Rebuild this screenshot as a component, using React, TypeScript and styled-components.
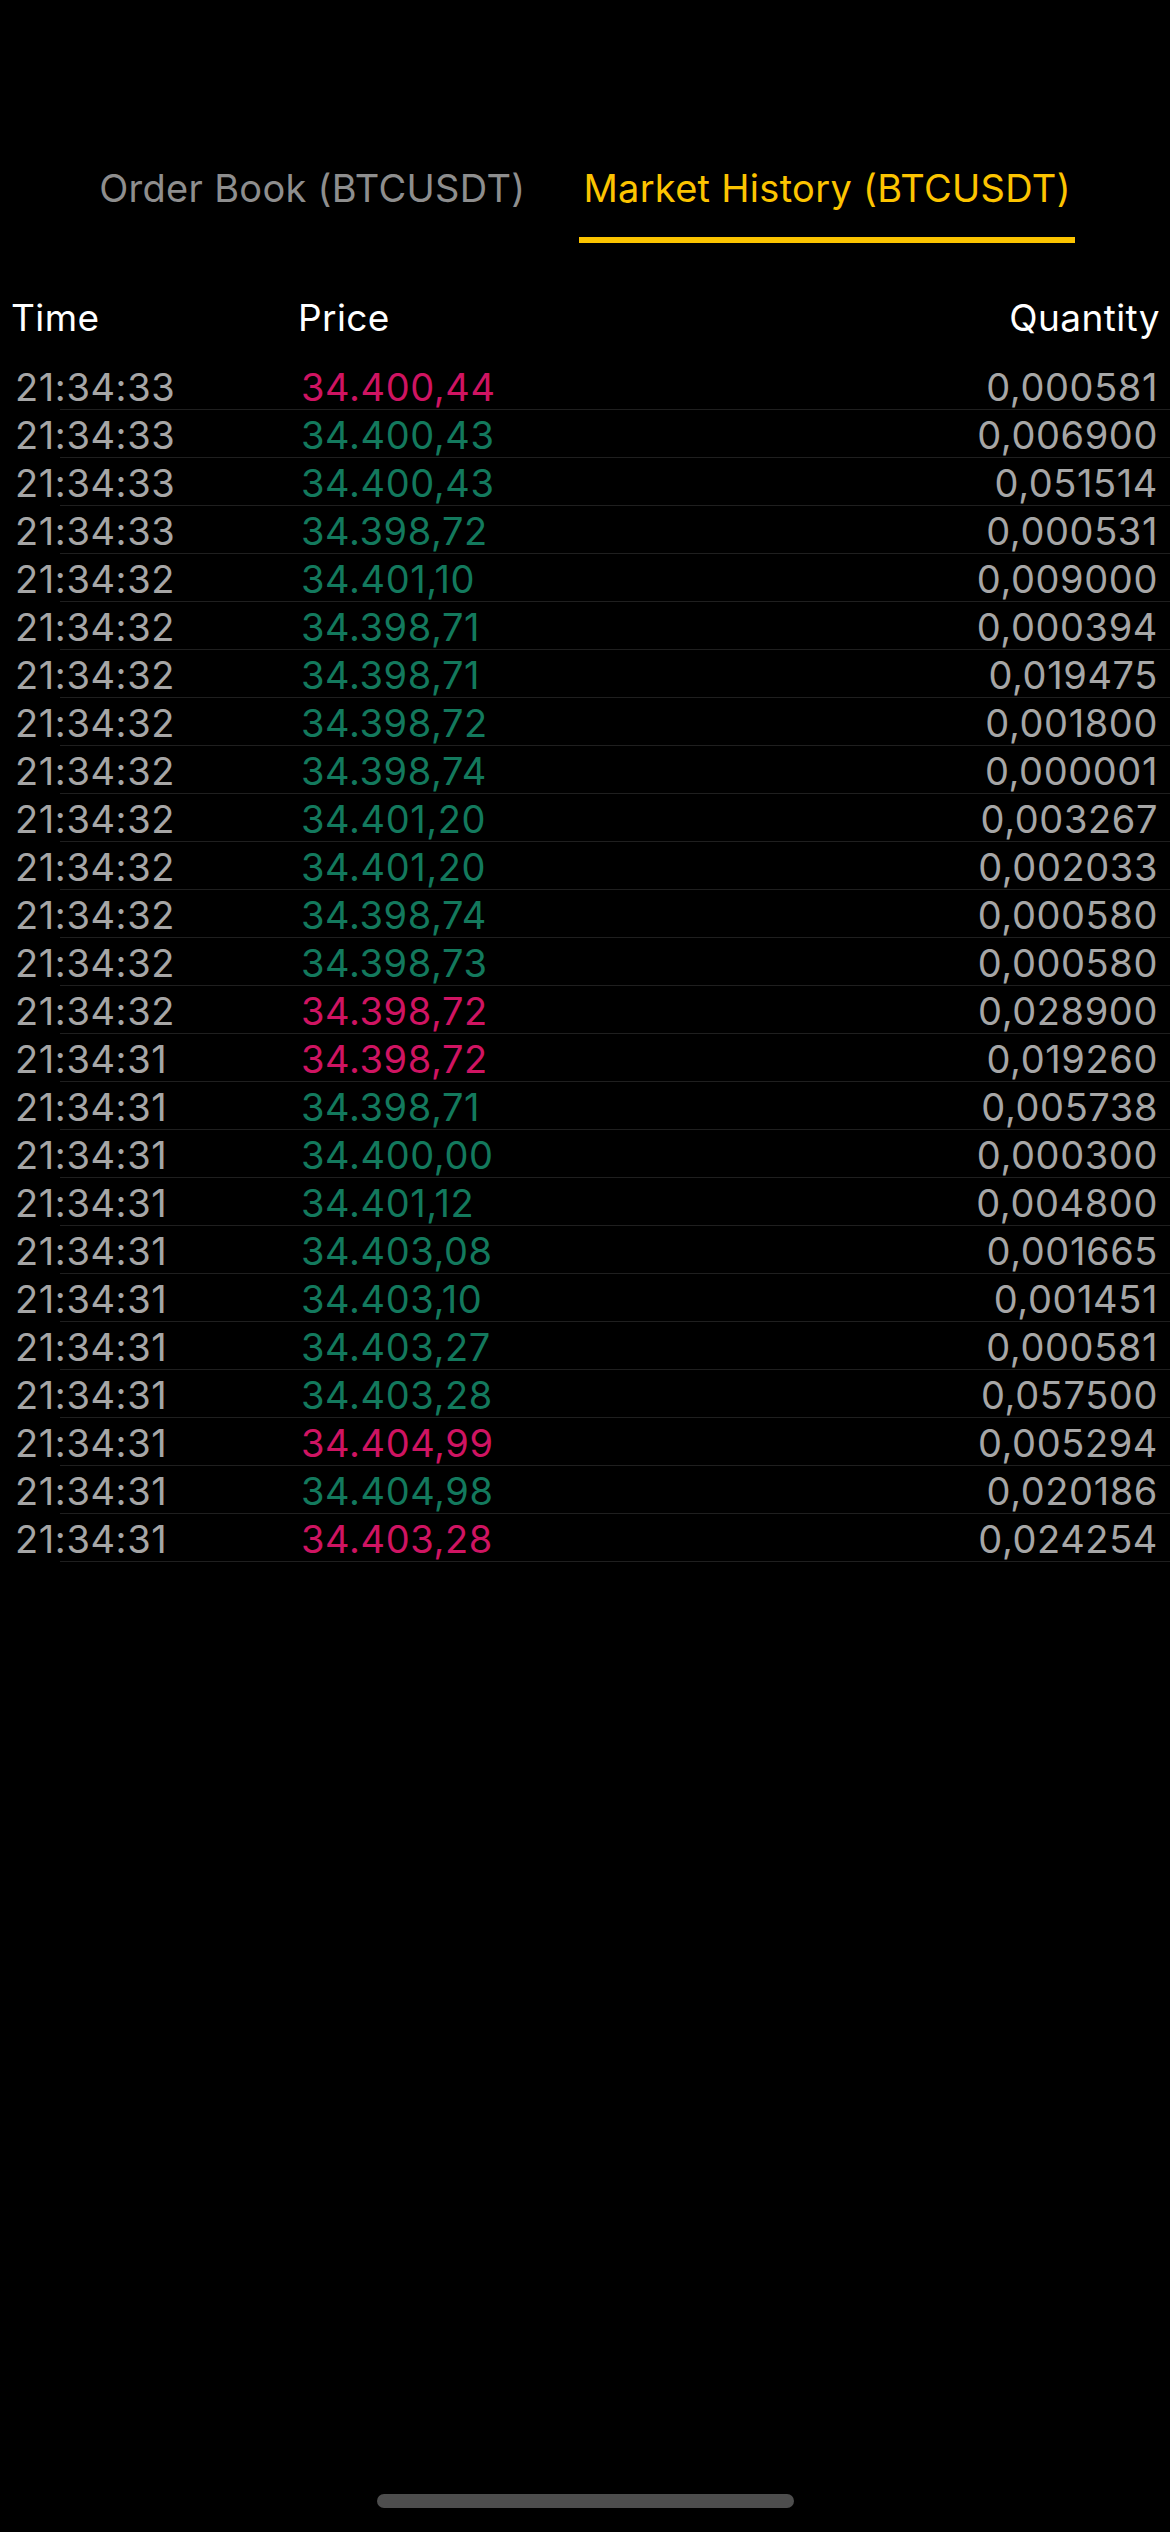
import React from 'react'
import styled, { createGlobalStyle } from 'styled-components'

type Side = 'buy' | 'sell'

type Trade = {
    time: string
    price: string
    qty: string
    side: Side
}

const trades: Trade[] = [
    { time: '21:34:33', price: '34.400,44', qty: '0,000581', side: 'sell' },
    { time: '21:34:33', price: '34.400,43', qty: '0,006900', side: 'buy' },
    { time: '21:34:33', price: '34.400,43', qty: '0,051514', side: 'buy' },
    { time: '21:34:33', price: '34.398,72', qty: '0,000531', side: 'buy' },
    { time: '21:34:32', price: '34.401,10', qty: '0,009000', side: 'buy' },
    { time: '21:34:32', price: '34.398,71', qty: '0,000394', side: 'buy' },
    { time: '21:34:32', price: '34.398,71', qty: '0,019475', side: 'buy' },
    { time: '21:34:32', price: '34.398,72', qty: '0,001800', side: 'buy' },
    { time: '21:34:32', price: '34.398,74', qty: '0,000001', side: 'buy' },
    { time: '21:34:32', price: '34.401,20', qty: '0,003267', side: 'buy' },
    { time: '21:34:32', price: '34.401,20', qty: '0,002033', side: 'buy' },
    { time: '21:34:32', price: '34.398,74', qty: '0,000580', side: 'buy' },
    { time: '21:34:32', price: '34.398,73', qty: '0,000580', side: 'buy' },
    { time: '21:34:32', price: '34.398,72', qty: '0,028900', side: 'sell' },
    { time: '21:34:31', price: '34.398,72', qty: '0,019260', side: 'sell' },
    { time: '21:34:31', price: '34.398,71', qty: '0,005738', side: 'buy' },
    { time: '21:34:31', price: '34.400,00', qty: '0,000300', side: 'buy' },
    { time: '21:34:31', price: '34.401,12', qty: '0,004800', side: 'buy' },
    { time: '21:34:31', price: '34.403,08', qty: '0,001665', side: 'buy' },
    { time: '21:34:31', price: '34.403,10', qty: '0,001451', side: 'buy' },
    { time: '21:34:31', price: '34.403,27', qty: '0,000581', side: 'buy' },
    { time: '21:34:31', price: '34.403,28', qty: '0,057500', side: 'buy' },
    { time: '21:34:31', price: '34.404,99', qty: '0,005294', side: 'sell' },
    { time: '21:34:31', price: '34.404,98', qty: '0,020186', side: 'buy' },
    { time: '21:34:31', price: '34.403,28', qty: '0,024254', side: 'sell' },
]

const GlobalStyle = createGlobalStyle`
    html, body {
        margin: 0;
        padding: 0;
        background: #000;
    }
    body {
        font-family: Inter, "Noto Sans", "Liberation Sans", sans-serif;
        -webkit-font-smoothing: antialiased;
    }
`

const Page = styled.div`
    display: flex;
    flex-direction: column;
    min-height: 100vh;
    background: #000;
    padding-top: 165px;
    box-sizing: border-box;
`

const TabBar = styled.nav`
    display: flex;
    justify-content: center;
    gap: 50px;
`

const Tab = styled.div<{ $active?: boolean }>`
    padding: 0 4px 26px;
    font-size: 38px;
    letter-spacing: 0.3px;
    line-height: 46px;
    color: ${p => (p.$active ? '#fcc400' : '#8e8e8e')};
    border-bottom: 6px solid ${p => (p.$active ? '#fcc400' : 'transparent')};
    white-space: nowrap;
`

const HeaderRow = styled.div`
    display: grid;
    grid-template-columns: 287px 1fr auto;
    padding: 0 10px 0 11px;
    margin-top: 52px;
    margin-bottom: 21px;
    font-size: 37px;
    letter-spacing: 0.4px;
    line-height: 46px;
    color: #fff;
`

const List = styled.ul`
    list-style: none;
    margin: 0;
    padding: 0;
`

const Row = styled.li`
    display: grid;
    grid-template-columns: 286px 1fr auto;
    align-items: end;
    height: 48px;
    padding: 0 12px 0 15px;
    box-sizing: border-box;
    font-size: 38px;
    letter-spacing: 0.6px;
    line-height: 46px;
    background-image: linear-gradient(#1f1f1f, #1f1f1f);
    background-size: calc(100% - 60px) 1px;
    background-position: right bottom;
    background-repeat: no-repeat;
`

const Time = styled.span`
    color: #a6a6a6;
`

const Price = styled.span<{ $side: Side }>`
    color: ${p => (p.$side === 'sell' ? '#cf1462' : '#13795d')};
`

const Qty = styled.span`
    color: #a6a6a6;
    text-align: right;
`

const HomeBar = styled.div`
    align-self: center;
    margin-top: auto;
    margin-bottom: 24px;
    width: 417px;
    height: 14px;
    border-radius: 7px;
    background: #4d4d4d;
`

export default function App() {
    return (
        <>
            <GlobalStyle />
            <Page>
                <TabBar>
                    <Tab>Order Book (BTCUSDT)</Tab>
                    <Tab $active>Market History (BTCUSDT)</Tab>
                </TabBar>
                <HeaderRow>
                    <span>Time</span>
                    <span>Price</span>
                    <span>Quantity</span>
                </HeaderRow>
                <List>
                    {trades.map((t, i) => (
                        <Row key={i}>
                            <Time>{t.time}</Time>
                            <Price $side={t.side}>{t.price}</Price>
                            <Qty>{t.qty}</Qty>
                        </Row>
                    ))}
                </List>
                <HomeBar />
            </Page>
        </>
    )
}
